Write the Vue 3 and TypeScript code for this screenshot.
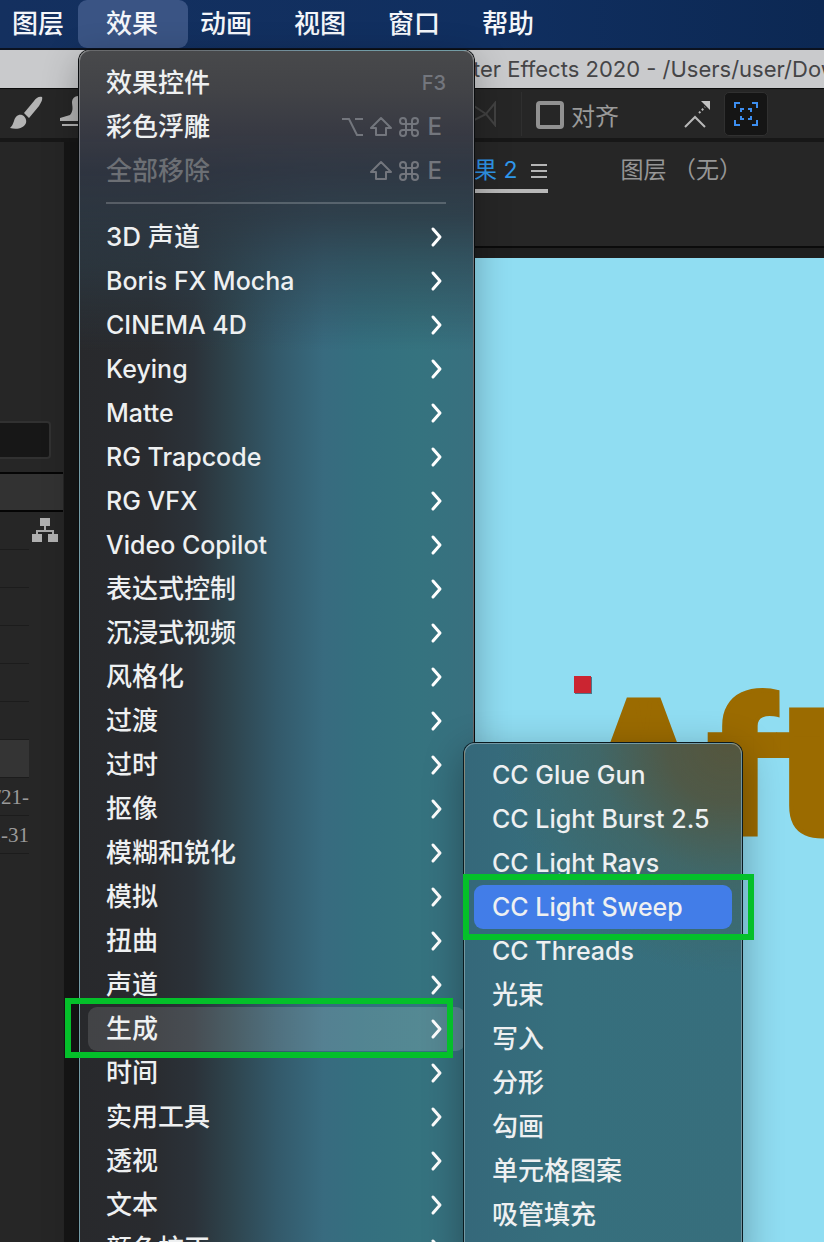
<script setup lang="ts">
interface MenuEntry {
  label: string
  keys?: string[]
  disabled?: boolean
}

const menuBar: string[] = ['图层', '效果', '动画', '视图', '窗口', '帮助']
const activeMenu = '效果'

const commands: MenuEntry[] = [
  { label: '效果控件', keys: ['F3'] },
  { label: '彩色浮雕', keys: ['option', 'shift', 'command', 'E'] },
  { label: '全部移除', keys: ['shift', 'command', 'E'], disabled: true },
]

const categories: string[] = [
  '3D 声道', 'Boris FX Mocha', 'CINEMA 4D', 'Keying', 'Matte', 'RG Trapcode', 'RG VFX',
  'Video Copilot', '表达式控制', '沉浸式视频', '风格化', '过渡', '过时', '抠像', '模糊和锐化',
  '模拟', '扭曲', '声道', '生成', '时间', '实用工具', '透视', '文本', '颜色校正',
]
const openCategory = '生成'

const effects: string[] = [
  'CC Glue Gun', 'CC Light Burst 2.5', 'CC Light Rays', 'CC Light Sweep', 'CC Threads',
  '光束', '写入', '分形', '勾画', '单元格图案', '吸管填充',
]
const selectedEffect = 'CC Light Sweep'

const projectRows: string[] = ['', '', '', '', '', '', '/21-', '1-31', '']

const isLatin = (label: string): boolean => /^[\x20-\x7e]+$/.test(label)
</script>

<template>
  <div class="screen">
    <nav class="menubar">
      <button v-for="m in menuBar" :key="m" type="button" :class="{ active: m === activeMenu }">{{ m }}</button>
    </nav>

    <header class="titlebar">ter Effects 2020 - /Users/user/Downloads</header>

    <div class="toolbar">
      <div class="tools">
        <button type="button" class="tool" aria-label="画笔">
          <svg width="34" height="34" viewBox="0 0 34 34">
            <path d="M33 1c-3-1-6 1-8 4L15 17l5 5 10-12c2-3 4-7 3-9z" fill="#b4b4b4" />
            <path d="M13 19c-4-1-7 2-8 6-1 3-2 5-4 7 7 2 14 0 16-5 1-3-1-7-4-8z" fill="#b4b4b4" />
          </svg>
        </button>
        <button type="button" class="tool" aria-label="仿制图章">
          <svg width="34" height="34" viewBox="0 0 34 34">
            <path d="M13 6a6 6 0 0 1 12 0c0 5-3 7-2 13h8c2 0 3 1 3 3v3H1v-3l10-3c4-5 2-9 2-13z" fill="#b4b4b4" />
            <path d="M3 28h30v2H3z" fill="#b4b4b4" />
          </svg>
        </button>
      </div>
      <svg class="ghost" width="24" height="26" viewBox="0 0 24 26">
        <path d="M0 5l12 8L21 2v22l-9-11-12 6" fill="none" stroke="#424242" stroke-width="2" />
      </svg>
      <span class="divider"></span>
      <label class="snap"><input type="checkbox" />对齐</label>
      <button type="button" class="tool vertex" aria-label="对齐边缘">
        <svg width="30" height="30" viewBox="0 0 30 30">
          <path d="M2 28l10-10 10 10" fill="none" stroke="#b8b8b8" stroke-width="2" />
          <path d="M16 14l6-6" stroke="#b8b8b8" stroke-width="2" stroke-dasharray="2 2" />
          <path d="M18 2h9v9z" fill="#c4c4c4" />
        </svg>
      </button>
      <button type="button" class="tool frame" aria-label="折叠边界">
        <svg width="26" height="26" viewBox="0 0 26 26" fill="none" stroke="#3d8ef0" stroke-width="2">
          <path d="M2 7V2h5M19 2h5v5M24 19v5h-5M7 24H2v-5" />
          <path d="M8 11V8h3M15 8h3v3M18 15v3h-3M11 18H8v-3" />
        </svg>
      </button>
    </div>

    <main class="workspace">
      <aside class="project">
        <input class="search" type="text" aria-label="搜索" />
        <div class="head"></div>
        <div class="list">
          <svg class="tree" width="26" height="24" viewBox="0 0 26 24">
            <path d="M13 8v5M5 16v-3h16v3" fill="none" stroke="#a8a8a8" stroke-width="2" />
            <path d="M8 0h10v8H8zM0 16h10v8H0zM16 16h10v8H16z" fill="#b0b0b0" />
          </svg>
          <div v-for="(r, i) in projectRows" :key="i" class="row" :class="{ chosen: i === 5 }">
            <span>{{ r }}</span>
          </div>
        </div>
      </aside>

      <section class="viewer">
        <div class="tabs">
          <button type="button" class="tab current">
            果 2
            <svg width="18" height="16" viewBox="0 0 18 16">
              <path d="M1 2h16M1 8h16M1 14h16" stroke="#b5b5b5" stroke-width="2" />
            </svg>
          </button>
          <button type="button" class="tab">图层 （无）</button>
        </div>
        <div class="canvas">
          <span class="anchor"></span>
          <span class="artwork">Aft</span>
        </div>
      </section>
    </main>

    <div class="menu effects-menu" role="menu">
      <button
        v-for="c in commands"
        :key="c.label"
        type="button"
        role="menuitem"
        class="item"
        :disabled="c.disabled"
      >
        <span>{{ c.label }}</span>
        <span class="keys" :class="{ fkey: c.keys && c.keys.length === 1 }">
          <template v-for="k in c.keys" :key="k">
            <svg v-if="k === 'option'" width="22" height="22" viewBox="0 0 22 22">
              <path d="M0 3h7l8 16h6M13 3h8" />
            </svg>
            <svg v-else-if="k === 'shift'" width="22" height="22" viewBox="0 0 22 22">
              <path d="M11 2L1 12h5v7h10v-7h5z" stroke-linejoin="round" />
            </svg>
            <svg v-else-if="k === 'command'" width="22" height="22" viewBox="0 0 22 22">
              <path d="M8 8V5a3 3 0 1 0-3 3h12a3 3 0 1 0-3-3v12a3 3 0 1 0 3-3H5a3 3 0 1 0 3 3z" />
            </svg>
            <kbd v-else>{{ k }}</kbd>
          </template>
        </span>
      </button>
      <hr />
      <button
        v-for="c in categories"
        :key="c"
        type="button"
        role="menuitem"
        class="item"
        :class="{ open: c === openCategory, latin: isLatin(c) }"
      >
        <span>{{ c }}</span>
        <svg width="16" height="22" viewBox="0 0 16 22">
          <path class="chevron" d="M3 3l7 8-7 8" />
        </svg>
        <span v-if="c === openCategory" class="mark"></span>
      </button>
    </div>

    <div class="menu sub-menu" role="menu">
      <button
        v-for="e in effects"
        :key="e"
        type="button"
        role="menuitem"
        class="item"
        :class="{ selected: e === selectedEffect, latin: isLatin(e) }"
      >
        <span>{{ e }}</span>
        <span v-if="e === selectedEffect" class="mark"></span>
      </button>
    </div>
  </div>
</template>

<style>
html,
body {
  margin: 0;
  background: #222;
}
</style>

<style scoped>
.screen {
  position: relative;
  display: flex;
  flex-direction: column;
  height: 100vh;
  overflow: hidden;
  background: #232323;
  font-family: Inter, "Noto Sans CJK SC", sans-serif;
}
button {
  margin: 0;
  padding: 0;
  border: 0;
  background: none;
  font: inherit;
  color: inherit;
}
svg {
  display: block;
  flex: none;
}
.menubar {
  display: flex;
  flex: none;
  gap: 42px;
  height: 48px;
  padding-left: 12px;
  background: linear-gradient(90deg, #14305f, #102f60 60%, #0c2853);
  border-bottom: 2px solid #0b1220;
}
.menubar button {
  flex: none;
  padding-bottom: 6px;
  color: #f4f6fa;
  font-size: 26px;
  font-weight: 500;
}
.menubar .active {
  margin: 0 -30px 0 -28px;
  padding: 0 30px 6px 28px;
  border-radius: 9px;
  background: #3a5484;
}
.titlebar {
  flex: none;
  height: 38px;
  padding-left: 473px;
  overflow: hidden;
  background: #c9cacc;
  border-bottom: 1px solid #0c0c0c;
  color: #454547;
  font-size: 22px;
  line-height: 38px;
  white-space: nowrap;
}
.toolbar {
  display: flex;
  flex: none;
  align-items: center;
  height: 49px;
  background: #262626;
  border-bottom: 4px solid #171717;
}
.tools {
  display: flex;
  flex: 0 0 474px;
  gap: 16px;
  padding: 0 0 2px 9px;
  box-sizing: border-box;
}
.ghost {
  margin-right: 23px;
}
.divider {
  width: 1px;
  height: 44px;
  background: #2f2f2f;
}
.snap {
  display: flex;
  align-items: center;
  gap: 7px;
  margin-left: 14px;
  padding-top: 2px;
  color: #9a9a9a;
  font-size: 24px;
}
.snap input {
  appearance: none;
  width: 28px;
  height: 28px;
  margin: 0;
  border: 4px solid #919191;
  border-radius: 4px;
}
.vertex {
  margin-left: 64px;
}
.frame {
  display: grid;
  place-items: center;
  width: 44px;
  height: 44px;
  margin-left: 11px;
  border: 1px solid #303030;
  border-radius: 5px;
  box-sizing: border-box;
  background: #151515;
}
.workspace {
  display: flex;
  flex: 1;
  min-height: 0;
}
.project {
  flex: 0 0 64px;
  padding-top: 279px;
  box-sizing: border-box;
  background: #262626;
}
.search {
  display: block;
  width: 51px;
  height: 38px;
  padding: 0;
  border: 2px solid #313131;
  border-left: 0;
  border-radius: 0 4px 4px 0;
  box-sizing: border-box;
  background: #171717;
}
.head {
  height: 36px;
  margin: 13px 1px 0 0;
  border: solid #050505;
  border-width: 2px 0;
  background: #323232;
}
.list {
  position: relative;
  padding-top: 37px;
}
.tree {
  position: absolute;
  top: 6px;
  left: 32px;
}
.row {
  display: flex;
  justify-content: flex-end;
  width: 29px;
  height: 38px;
  border-top: 1px solid #1c1c1c;
  box-sizing: border-box;
  color: #9a9a9a;
  font-family: "Liberation Serif", serif;
  font-size: 21px;
  line-height: 38px;
  white-space: nowrap;
}
.row.chosen {
  background: #343434;
}
.viewer {
  display: flex;
  flex: 1;
  flex-direction: column;
  min-width: 0;
  border-left: 14px solid #161616;
}
.tabs {
  display: flex;
  flex: none;
  align-items: flex-start;
  gap: 73px;
  height: 104px;
  padding-left: 396px;
  border-bottom: 2px solid #0b0b0b;
  background: #262626;
  color: #969696;
  font-size: 23px;
  line-height: 33px;
  white-space: nowrap;
}
.tab {
  padding-top: 12px;
}
.tab.current {
  display: flex;
  gap: 12px;
  align-items: center;
  padding-bottom: 2px;
  border-bottom: 4px solid #b8b8b8;
  color: #2f97ea;
}
.canvas {
  position: relative;
  flex: 1;
  overflow: hidden;
  border-top: 10px solid #1f1f1f;
  background: #90ddf2;
}
.anchor {
  position: absolute;
  top: 418px;
  left: 496px;
  width: 17px;
  height: 17px;
  background: #cb2531;
  box-shadow: 1px 1px 0 #4d7488;
}
.artwork {
  position: absolute;
  top: 401px;
  left: 501px;
  color: #9b6b00;
  font-family: Roboto, sans-serif;
  font-size: 190px;
  font-weight: 900;
  line-height: 220px;
  -webkit-text-stroke: 4px #9b6b00;
}
.menu {
  position: absolute;
  box-sizing: border-box;
  border: 1px solid rgba(255, 255, 255, 0.3);
  color: #eef0f1;
  font-size: 26px;
  font-weight: 500;
  line-height: 44px;
}
.effects-menu {
  top: 50px;
  left: 79px;
  width: 395px;
  padding: 10px 8px;
  border-radius: 11px;
  background:
    linear-gradient(180deg, #48494b 0, #424347 40px, #383a43 80px, rgba(47, 53, 65, 0.95) 120px, rgba(45, 56, 67, 0.85) 165px, rgba(45, 62, 74, 0.55) 215px, transparent 300px),
    linear-gradient(90deg, #28292c 0, #292b2f 18%, #2b3239 29%, #2e434c 38%, #33596a 50%, #386b7f 62%, #346f7f 71%, #35737f 86%, #38707f 100%);
  box-shadow: 0 0 0 1px #0a0d0f, 0 10px 36px rgba(0, 0, 0, 0.3);
}
.sub-menu {
  top: 743px;
  left: 464px;
  width: 278px;
  padding: 9px 9px 30px;
  border-radius: 11px;
  background:
    radial-gradient(circle at 95% 0, #54563e 0, rgba(82, 87, 66, 0.9) 60px, rgba(70, 98, 90, 0.6) 130px, transparent 230px),
    linear-gradient(90deg, #35687a, #366f7d 35%, #376e7c);
  box-shadow: 0 0 0 1px #0a1a20, 0 10px 40px rgba(0, 0, 0, 0.32);
}
.item {
  position: relative;
  display: flex;
  align-items: center;
  justify-content: space-between;
  width: 100%;
  height: 44px;
  padding: 0 19px 0 18px;
  border-radius: 9px;
  text-align: left;
  white-space: nowrap;
}
.item.latin {
  font-size: 25px;
}
.item:disabled {
  color: #6c6f74;
}
.item.open {
  background: linear-gradient(90deg, rgba(255, 255, 255, 0.12), rgba(255, 255, 255, 0.16));
}
.item.selected {
  background: #427de8;
}
.chevron {
  fill: none;
  stroke: #fff;
  stroke-width: 3;
  stroke-linecap: round;
  stroke-linejoin: round;
}
.keys {
  display: flex;
  align-items: center;
  gap: 6px;
  padding-right: 4px;
  color: #73767d;
  font-size: 24px;
}
.keys.fkey {
  padding-right: 0;
  font-size: 20px;
}
.keys svg {
  fill: none;
  stroke: currentColor;
  stroke-width: 2;
}
kbd {
  padding-left: 2px;
  font-family: inherit;
}
.fkey kbd {
  padding-left: 0;
}
hr {
  height: 2px;
  margin: 9px 19px 11px 18px;
  border: 0;
  background: rgba(255, 255, 255, 0.2);
}
.mark {
  position: absolute;
  z-index: 2;
  border: 6px solid #04c02a;
}
.open .mark {
  inset: -9px 12px -7px -23px;
}
.selected .mark {
  inset: -11px -22px -11px -11px;
}
</style>
